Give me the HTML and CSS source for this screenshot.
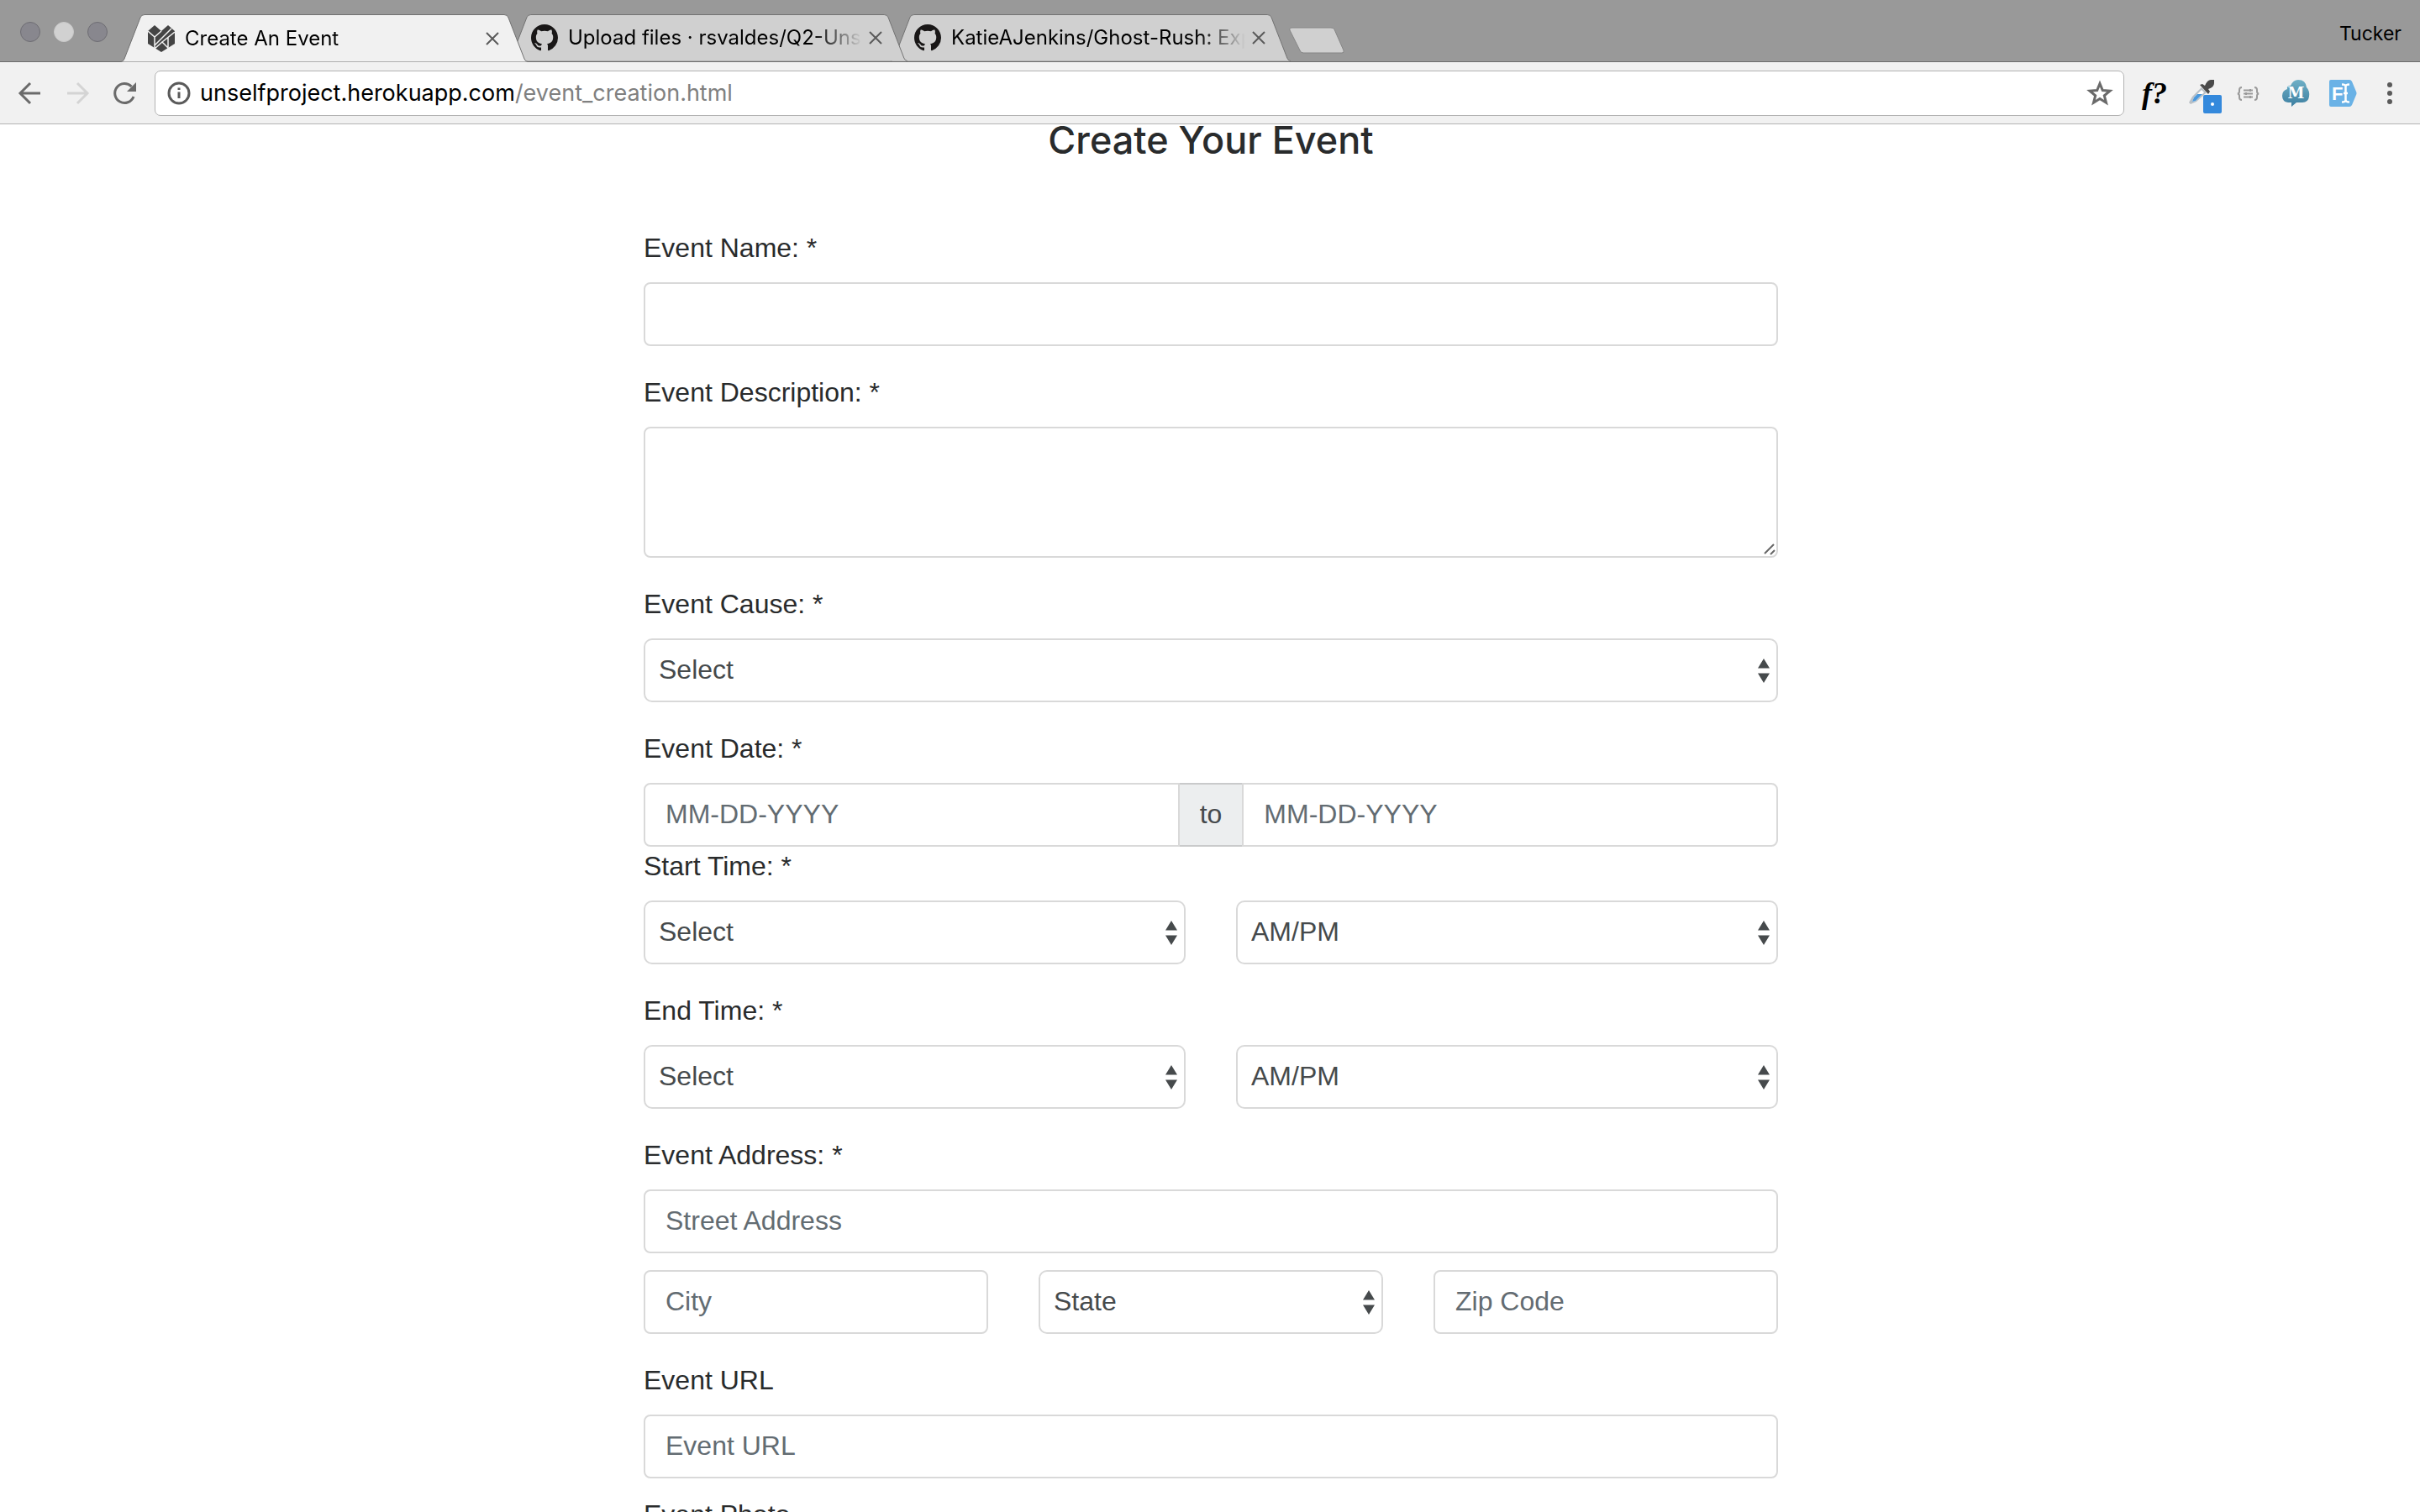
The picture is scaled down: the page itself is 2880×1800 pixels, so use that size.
FILE: index.html
```html
<!DOCTYPE html>
<html lang="en">
<head>
<meta charset="utf-8">
<title>Create An Event</title>
<link rel="stylesheet" href="styles.css">
</head>
<body>
<svg class="symbols" aria-hidden="true">
  <symbol id="tab-shape" viewBox="0 0 484 57"><path d="M0 56.500Q3 56 4 53L23 4Q24 .5 28 .5H456Q460 .5 461 4L480 53Q481 56 484 56.500"/></symbol>
  <symbol id="github" viewBox="0 0 16 16"><path d="M8 0C3.580 0 0 3.580 0 8c0 3.540 2.290 6.530 5.470 7.590.4.070.55-.17.55-.38 0-.19-.01-.82-.01-1.490-2.010.37-2.530-.49-2.690-.94-.09-.23-.48-.94-.82-1.130-.28-.15-.68-.52-.01-.53.63-.01 1.080.58 1.230.82.72 1.210 1.870.87 2.330.66.070-.52.28-.87.51-1.070-1.780-.2-3.640-.89-3.640-3.950 0-.87.31-1.590.82-2.150-.08-.2-.36-1.020.08-2.120 0 0 .67-.21 2.200.82.64-.18 1.320-.27 2-.27s1.360.09 2 .27c1.530-1.040 2.200-.82 2.200-.82.44 1.100.16 1.920.08 2.120.51.56.82 1.270.82 2.150 0 3.070-1.870 3.750-3.650 3.950.29.25.54.73.54 1.480 0 1.070-.01 1.930-.01 2.200 0 .21.15.46.55.38A8.010 8.010 0 0 0 16 8c0-4.420-3.580-8-8-8z"/></symbol>
  <symbol id="close" viewBox="0 0 16 16"><path d="M1 1L15 15M15 1L1 15"/></symbol>
</svg>

<header class="browser">
  <div class="titlebar">
    <div class="lights"><span class="light"></span><span class="light light-mid"></span><span class="light"></span></div>
    <nav class="tabs">
      <div class="tab tab-active">
        <svg class="tab-bg"><use href="#tab-shape"/></svg>
        <svg class="favicon heart" viewBox="0 0 32 32"><path class="heart-body" d="M8 0L16 7L24 0L32 7V22L16 32L0 22V7Z"/><path class="heart-lines" d="M0 7L8 14L16 7M8 14V28M8 24L28 4M8 28L17 20L24 27M17 20L32 8M24 15V28"/></svg>
        <span class="tab-title">Create An Event</span>
        <button class="tab-close" aria-label="Close tab"><svg><use href="#close"/></svg></button>
      </div>
      <div class="tab tab-second">
        <svg class="tab-bg"><use href="#tab-shape"/></svg>
        <svg class="favicon"><use href="#github"/></svg>
        <span class="tab-title">Upload files · rsvaldes/Q2-Unself</span>
        <button class="tab-close" aria-label="Close tab"><svg><use href="#close"/></svg></button>
      </div>
      <div class="tab">
        <svg class="tab-bg"><use href="#tab-shape"/></svg>
        <svg class="favicon"><use href="#github"/></svg>
        <span class="tab-title">KatieAJenkins/Ghost-Rush: Express</span>
        <button class="tab-close" aria-label="Close tab"><svg><use href="#close"/></svg></button>
      </div>
    </nav>
    <button class="new-tab" aria-label="New tab"><svg viewBox="0 0 66 32"><path d="M4 1H50Q53 1 54 3L65 28Q66 31 63 31H17Q14 31 13 28L1 4Q0 1 4 1Z"/></svg></button>
    <span class="profile">Tucker</span>
  </div>

  <div class="toolbar">
    <button class="tool" aria-label="Back"><svg class="line" viewBox="0 0 40 40"><path d="M32 20H9M20 8L8 20L20 32"/></svg></button>
    <button class="tool tool-off" aria-label="Forward"><svg class="line" viewBox="0 0 40 40"><path d="M8 20H31M20 8L32 20L20 32"/></svg></button>
    <button class="tool" aria-label="Reload"><svg class="line" viewBox="0 0 40 40"><path d="M31 24A11.500 11.500 0 1 1 28.500 12"/><path class="solid" d="M34 7V18H23Z"/></svg></button>
    <div class="omnibox">
      <svg class="info" viewBox="0 0 28 28"><circle cx="14" cy="14" r="12"/><path d="M14 12.500V20M14 7.500V10"/></svg>
      <a class="url" href="#"><span class="host">unselfproject.herokuapp.com</span>/event_creation.html</a>
      <button class="star" aria-label="Bookmark"><svg viewBox="0 0 32 32"><path d="M16 4.500L19.300 12.600L28 13.200L21.300 18.800L23.500 27.300L16 22.600L8.500 27.300L10.700 18.800L4 13.200L12.700 12.600Z"/></svg></button>
    </div>
    <button class="tool whatfont">f?</button>
    <button class="tool" aria-label="Color picker"><svg viewBox="0 0 40 40">
      <path d="M7 33L5 31L9 24L20 13L26 19L14 30Z" fill="#b9c0c6"/><path d="M9 30L11 25L20 16L23 19L13 29Z" fill="#fff"/><path d="M9 30L11 25L15 21H21L13 29Z" fill="#4a98dc"/>
      <path d="M18 10L21 9L24 11Q27 4 31 4H35V8Q35 13 28 15L30 18L28 21Z" fill="#4a4a4a"/>
      <rect x="22" y="22" width="22" height="22" rx="2" fill="#3489dc"/><circle cx="33" cy="33" r="2" fill="#fff"/></svg></button>
    <button class="tool" aria-label="Formatter"><svg viewBox="0 0 40 40" class="braces"><path d="M12 13Q9 13 9 16V18Q9 20 7 20.500Q9 21 9 23V25Q9 28 12 28M27 13Q30 13 30 16V18Q30 20 32 20.500Q30 21 30 23V25Q30 28 27 28M14 16.500H25M14 20.500H25M14 24.500H25"/><path class="ticks" d="M22 15V18M17 19V22M22 23V26"/></svg></button>
    <button class="tool" aria-label="Cloud"><svg viewBox="0 0 40 40"><defs><linearGradient id="cloud" x2="0" y2="1"><stop stop-color="#6fb0c6"/><stop offset="1" stop-color="#3c7ea0"/></linearGradient></defs><path d="M15 36V31H11Q4 30 4 23Q4 17 10 15Q9 11 14 11Q17 4 23 4Q32 4 33 13Q37 17 36 24Q35 31 28 31H21Z" fill="url(#cloud)"/><text x="20.500" y="26" class="cloud-m">M</text></svg></button>
    <button class="tool" aria-label="Form filler"><svg viewBox="0 0 40 40"><path d="M6 4H28Q30 4 31 6L36 18Q37 20 36 22L31 34Q30 36 28 36H6Q4 36 4 34V6Q4 4 6 4Z" fill="#6ab2e6"/><text x="7" y="28" class="fill-f">F</text><path d="M19 9.500Q23.500 9.500 23.500 12V28Q23.500 30.500 19 30.500M28 9.500Q23.500 9.500 23.500 12M28 30.500Q23.500 30.500 23.500 28M21 20H26" fill="none" stroke="#fff" stroke-width="2.500"/></svg></button>
    <button class="tool" aria-label="Menu"><svg class="dots" viewBox="0 0 40 40"><circle cx="20" cy="10" r="3"/><circle cx="20" cy="20" r="3"/><circle cx="20" cy="30" r="3"/></svg></button>
  </div>
</header>

<main class="page">
  <form class="event-form">
    <h1 class="heading">Create Your Event</h1>

    <div class="group">
      <label for="name">Event Name: *</label>
      <input class="control" id="name" type="text">
    </div>
    <div class="group">
      <label for="description">Event Description: *</label>
      <textarea class="control" id="description"></textarea>
    </div>
    <div class="group">
      <label for="cause">Event Cause: *</label>
      <select class="control" id="cause"><option>Select</option></select>
    </div>
    <div class="group group-flush">
      <label for="date-from">Event Date: *</label>
      <div class="date-range">
        <input class="control" id="date-from" type="text" placeholder="MM-DD-YYYY">
        <span class="addon">to</span>
        <input class="control" type="text" placeholder="MM-DD-YYYY" aria-label="End date">
      </div>
    </div>
    <div class="group">
      <label for="start">Start Time: *</label>
      <div class="row">
        <select class="control" id="start"><option>Select</option></select>
        <select class="control" aria-label="Start AM or PM"><option>AM/PM</option></select>
      </div>
    </div>
    <div class="group">
      <label for="end">End Time: *</label>
      <div class="row">
        <select class="control" id="end"><option>Select</option></select>
        <select class="control" aria-label="End AM or PM"><option>AM/PM</option></select>
      </div>
    </div>
    <div class="group">
      <label for="street">Event Address: *</label>
      <div class="stack">
        <input class="control" id="street" type="text" placeholder="Street Address">
        <div class="row">
          <input class="control" type="text" placeholder="City" aria-label="City">
          <select class="control" aria-label="State"><option>State</option></select>
          <input class="control" type="text" placeholder="Zip Code" aria-label="Zip Code">
        </div>
      </div>
    </div>
    <div class="group group-tight">
      <label for="url">Event URL</label>
      <input class="control" id="url" type="text" placeholder="Event URL">
    </div>
    <div class="group">
      <label for="photo">Event Photo</label>
      <input class="control" id="photo" type="text">
    </div>
  </form>
</main>
</body>
</html>
```
FILE: styles.css
```css
* { box-sizing: border-box; }

body {
  margin: 0;
  height: 100vh;
  display: flex;
  flex-direction: column;
  overflow: hidden;
  background: #fff;
  color: #292b2c;
  font: 32px/46px "Liberation Sans", Arial, sans-serif;
}

button {
  padding: 0;
  border: 0;
  background: none;
  color: inherit;
  font: inherit;
}

svg { display: block; }
.symbols { display: none; }

/* Browser window */
.browser {
  flex: none;
  font-family: Inter, sans-serif;
  color: #000;
}

.titlebar {
  display: flex;
  height: 74px;
  align-items: flex-end;
  background: #999;
  border-bottom: 1px solid #6b6b6b;
}

.lights {
  display: flex;
  gap: 16px;
  width: 144px;
  padding: 0 0 23px 24px;
}

.light {
  width: 24px;
  height: 24px;
  border: 1px solid #6e6d73;
  border-radius: 50%;
  background: #88878e;
}

.light-mid {
  border-color: #c8c8c8;
  background: #d1d1d1;
}

.tabs { display: flex; margin-bottom: -1px; }

.tab {
  position: relative;
  display: flex;
  align-items: center;
  width: 484px;
  height: 57px;
  padding: 0 34px 0 32px;
  font-size: 24px;
  line-height: 32px;
}

.tab + .tab { margin-left: -28px; }
.tab-active { z-index: 2; }
.tab-second { z-index: 1; }

.tab-bg {
  position: absolute;
  inset: 0;
  z-index: -1;
  width: 100%;
  height: 100%;
  fill: #d0d0d0;
  stroke: #707070;
}

.tab:last-child { z-index: 0; }
.tab-active .tab-bg { fill: #f1f1f1; }
.tab:not(.tab-active) { border-bottom: 1px solid #6b6b6b; }

.favicon {
  flex: none;
  width: 32px;
  height: 32px;
  fill: #191717;
}

.heart-body { fill: #444; }
.heart-lines { fill: none; stroke: #f1f1f1; stroke-width: 1.5; }

.tab-title {
  flex: 1;
  min-width: 0;
  margin: 0 8px 0 12px;
  overflow: hidden;
  white-space: nowrap;
  -webkit-mask-image: linear-gradient(to left, transparent, #000 56px);
  mask-image: linear-gradient(to left, transparent, #000 56px);
}

.tab-close svg {
  width: 16px;
  height: 16px;
  fill: none;
  stroke: #5a5a5a;
  stroke-width: 2;
}

.new-tab { margin: 0 0 9px -6px; }

.new-tab svg {
  width: 66px;
  height: 32px;
  fill: #d0d0d0;
  stroke: #858585;
}

.profile {
  margin-left: auto;
  padding: 0 22px 17px 0;
  font-size: 23px;
  line-height: 32px;
}

.toolbar {
  display: flex;
  align-items: center;
  gap: 16px;
  height: 74px;
  padding: 0 16px;
  background: #f1f1f1;
  border-bottom: 1px solid #b3b3b3;
}

.tool { width: 40px; height: 40px; flex: none; color: #6a6a6a; }
.tool-off { color: #d4d4d4; }
.tool svg { width: 40px; height: 40px; overflow: visible; }
.line { fill: none; stroke: currentColor; stroke-width: 3; }
.line .solid { fill: currentColor; stroke: none; }
.dots { fill: #5a5a5a; }

.omnibox {
  display: flex;
  flex: 1;
  align-items: center;
  height: 54px;
  padding: 0 12px 0 14px;
  background: #fff;
  border: 1px solid #b3b3b3;
  border-radius: 7px;
}

.info {
  width: 28px;
  height: 28px;
  fill: none;
  stroke: #5a5a5a;
  stroke-width: 3;
}

.url {
  flex: 1;
  margin-left: 11px;
  color: #808080;
  font-size: 27px;
  line-height: 40px;
  text-decoration: none;
}

.host { color: #000; }

.star svg {
  width: 32px;
  height: 32px;
  fill: none;
  stroke: #6a6a6a;
  stroke-width: 3;
}

.whatfont {
  color: #000;
  font: italic bold 36px/36px "Liberation Serif", serif;
}

.braces { fill: none; stroke: #9a9a9a; stroke-width: 2; }
.braces .ticks { stroke-width: 2; }

.cloud-m {
  fill: #fff;
  font: bold 18px "DejaVu Serif", serif;
  text-anchor: middle;
}

.fill-f {
  fill: #fff;
  font: bold 22px "Liberation Sans", sans-serif;
}

/* Event form */
.page {
  flex: 1;
  min-height: 0;
  padding: 0 30px 0 32px;
}

.event-form { max-width: 1350px; margin: 0 auto; }

.heading {
  margin: 0 0 86px;
  font: 500 45px/38px Inter, sans-serif;
  text-align: center;
}

.group { margin-bottom: 32px; }
.group-flush { margin-bottom: 0; }
.group-tight { margin-bottom: 20px; }

label { display: block; margin-bottom: 18px; }

.control {
  display: block;
  width: 100%;
  min-width: 0;
  height: 76px;
  margin: 0;
  padding: 0 24px 2px;
  background: #fff;
  border: 2px solid #d9d9d9;
  border-radius: 8px;
  color: #464a4c;
  font: inherit;
}

.control::placeholder { color: #636c72; opacity: 1; }

textarea.control { height: 156px; resize: vertical; }

textarea.control::-webkit-resizer {
  background: url("data:image/svg+xml,%3Csvg xmlns='http://www.w3.org/2000/svg' viewBox='0 0 15 15'%3E%3Cpath d='M1 12L12 1M8 13L13 8' stroke='%23666' stroke-width='2' fill='none'/%3E%3C/svg%3E") no-repeat;
}

select.control {
  appearance: none;
  padding: 0 16px 2px;
  border-radius: 10px;
  background: #fff url("data:image/svg+xml,%3Csvg xmlns='http://www.w3.org/2000/svg' viewBox='0 0 14 29'%3E%3Cpath d='M0 11.500L7 0L14 11.500ZM0 17.500H14L7 29Z' fill='%23464a4c'/%3E%3C/svg%3E") no-repeat right 8px center / 14px 29px;
}

.row {
  display: grid;
  grid-auto-flow: column;
  grid-auto-columns: minmax(0, 1fr);
  gap: 60px;
}

.stack { display: grid; gap: 20px; }

.date-range { display: flex; }
.date-range .control { flex: 1; }
.date-range .control:first-child { border-radius: 8px 0 0 8px; }
.date-range .control:last-child { border-radius: 0 8px 8px 0; }

.addon {
  padding: 12px 24px 14px;
  background: #eceeef;
  border: solid #c9cacb;
  border-width: 2px 0;
  color: #464a4c;
}
```
